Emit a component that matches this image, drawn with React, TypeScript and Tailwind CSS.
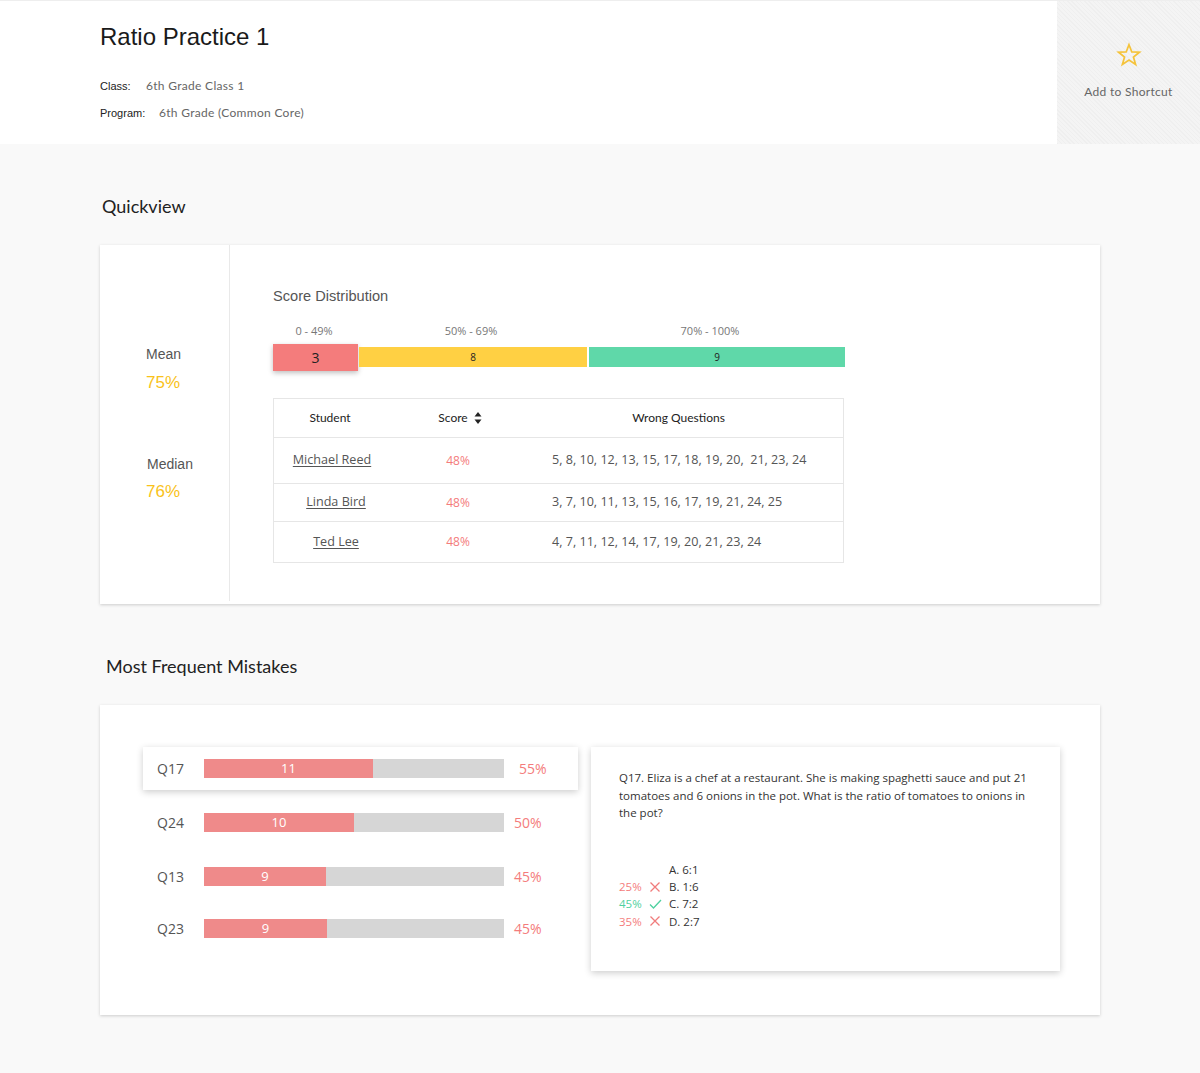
import React from "react";

const lato = "font-['Lato',sans-serif]";
const open = "font-['Open_Sans',sans-serif]";
const helv = "font-['Liberation_Sans',Arial,sans-serif]";

function Star() {
  return (
    <svg width="26" height="26" viewBox="0 0 24 24" fill="none" stroke="#f5c33b" strokeWidth="1.6" strokeLinejoin="miter">
      <polygon points="12,2.5 14.6,9.2 21.6,9.4 16.1,13.8 18.1,20.8 12,16.7 5.9,20.8 7.9,13.8 2.4,9.4 9.4,9.2" />
    </svg>
  );
}

function XIcon() {
  return (
    <svg width="12" height="12" viewBox="0 0 12 12" stroke="#f07c7c" strokeWidth="1.3" fill="none">
      <path d="M1.5 1.5 L10.5 10.5 M10.5 1.5 L1.5 10.5" />
    </svg>
  );
}

function Check() {
  return (
    <svg width="13" height="12" viewBox="0 0 13 12" stroke="#4fd1a0" strokeWidth="1.3" fill="none">
      <path d="M1 6.5 L4.5 10 L12 2" />
    </svg>
  );
}

function SortIcon() {
  return (
    <svg width="8" height="14" viewBox="0 0 8 14" fill="#222">
      <path d="M4 1 L7.5 5.5 H0.5 Z" />
      <path d="M4 13 L7.5 8.5 H0.5 Z" />
    </svg>
  );
}

const students = [
  { name: "Michael Reed", score: "48%", wrong: "5, 8, 10, 12, 13, 15, 17, 18, 19, 20,  21, 23, 24", h: "h-[46px]", pad: "pr-[9px]" },
  { name: "Linda Bird", score: "48%", wrong: "3, 7, 10, 11, 13, 15, 16, 17, 19, 21, 24, 25", h: "h-[38px]", pad: "pr-[1px]" },
  { name: "Ted Lee", score: "48%", wrong: "4, 7, 11, 12, 14, 17, 19, 20, 21, 23, 24", h: "h-[40px]", pad: "pr-[1px]" },
];

const mistakes = [
  { q: "Q17", n: 11, w: 169, pct: "55%", active: true },
  { q: "Q24", n: 10, w: 150, pct: "50%", active: false },
  { q: "Q13", n: 9, w: 122, pct: "45%", active: false },
  { q: "Q23", n: 9, w: 123, pct: "45%", active: false },
];

const answers = [
  { pct: "", color: "", icon: null as React.ReactNode, label: "A. 6:1" },
  { pct: "25%", color: "text-[#f47c7c]", icon: <XIcon />, label: "B. 1:6" },
  { pct: "45%", color: "text-[#4fd1a0]", icon: <Check />, label: "C. 7:2" },
  { pct: "35%", color: "text-[#f47c7c]", icon: <XIcon />, label: "D. 2:7" },
];

export default function App() {
  return (
    <div className="min-h-[1073px] w-[1200px] bg-[#f9f9f9] pb-[58px]">
      {/* Header */}
      <div className="flex h-[144px] border-t border-[#eeeeee] bg-white">
        <div className="flex-1 pl-[100px] pt-[21px]">
          <h1 className={`${helv} text-[24px] leading-[30px] text-[#1a1a1a]`}>Ratio Practice 1</h1>
          <div className="mt-[26px] flex items-center text-[12px] leading-[16px]">
            <span className={`${helv} w-[46px] text-[11px] text-[#222]`}>Class:</span>
            <span className={`${lato} tracking-[0.3px] text-[#666]`}>6th Grade Class 1</span>
          </div>
          <div className="mt-[11px] flex items-center text-[12px] leading-[16px]">
            <span className={`${helv} w-[59px] text-[11px] text-[#222]`}>Program:</span>
            <span className={`${lato} tracking-[0.3px] text-[#666]`}>6th Grade (Common Core)</span>
          </div>
        </div>
        <div className="flex w-[143px] flex-col items-center bg-[repeating-linear-gradient(45deg,#efefef_0px,#efefef_1px,#f4f4f4_1px,#f4f4f4_3px)] pt-[41px]">
          <Star />
          <div className={`${lato} mt-[15px] text-[12px] tracking-[0.3px] text-[#666]`}>Add to Shortcut</div>
        </div>
      </div>

      <div className="mx-auto w-[1000px]">
        {/* Quickview */}
        <h2 className={`${lato} ml-[2px] mt-[51px] text-[18px] leading-[22px] text-[#222]`}>Quickview</h2>
        <div className="mt-[28px] flex h-[359px] bg-white shadow-[0_1px_3px_rgba(0,0,0,0.18)]">
          <div className="mb-[3px] w-[130px] border-r border-[#e9e9e9] pl-[46px] pt-[100px]">
            <div className={`${helv} text-[14px] leading-[18px] text-[#555]`}>Mean</div>
            <div className={`${helv} mt-[10px] text-[17px] leading-[20px] text-[#f9c21a]`}>75%</div>
            <div className={`${helv} mt-[62px] ml-[1px] text-[14px] leading-[18px] text-[#555]`}>Median</div>
            <div className={`${helv} mt-[9px] text-[17px] leading-[20px] text-[#f9c21a]`}>76%</div>
          </div>
          <div className="pl-[43px] pt-[42px]">
            <div className={`${helv} text-[14.6px] leading-[18px] text-[#555]`}>Score Distribution</div>
            <div className={`${open} mt-[19px] flex text-[11px] leading-[14px] text-[#777]`}>
              <div className="w-[86px] pr-[4px] text-center">0 - 49%</div>
              <div className="w-[230px] pr-[6px] text-center">50% - 69%</div>
              <div className="w-[256px] pr-[14px] text-center">70% - 100%</div>
            </div>
            <div className="mt-[5px] flex h-[28px] items-center">
              <div className={`${open} flex h-[27px] w-[85px] items-center justify-center bg-[#f47c7c] text-[14px] text-[#222] shadow-[0_2px_5px_rgba(0,0,0,0.25)]`}>3</div>
              <div className={`${open} ml-[1px] flex h-[20px] w-[228px] items-center justify-center bg-[#ffd043] text-[10px] text-[#222]`}>8</div>
              <div className={`${open} ml-[2px] flex h-[20px] w-[256px] items-center justify-center bg-[#5fd8a9] text-[10px] text-[#222]`}>9</div>
            </div>
            <div className={`${open} mt-[27px] w-[571px] border border-[#e6e6e6] text-[12.6px] text-[#555]`}>
              <div className={`${lato} flex h-[39px] items-center border-b border-[#e6e6e6] text-[12px] text-[#222]`}>
                <div className="w-[112px] text-center">Student</div>
                <div className="flex w-[120px] items-center justify-center gap-[6px] pl-[28px]">
                  Score <SortIcon />
                </div>
                <div className="flex-1 pl-[8px] text-center">Wrong Questions</div>
              </div>
              {students.map((s, i) => (
                <div key={s.name} className={`flex ${s.h} items-center ${i < students.length - 1 ? "border-b border-[#e6e6e6]" : ""}`}>
                  <div className={`w-[125px] ${s.pad} text-center underline underline-offset-2`}>{s.name}</div>
                  <div className="w-[120px] pr-[2px] text-center text-[12px] text-[#f47c7c]">{s.score}</div>
                  <div className="flex-1 whitespace-pre pl-[33px]">{s.wrong}</div>
                </div>
              ))}
            </div>
          </div>
        </div>

        {/* Most Frequent Mistakes */}
        <h2 className={`${lato} ml-[6px] mt-[51px] text-[18px] leading-[22px] text-[#222]`}>Most Frequent Mistakes</h2>
        <div className="mt-[28px] flex h-[310px] items-start bg-white pl-[43px] pt-[42px] shadow-[0_1px_3px_rgba(0,0,0,0.18)]">
          <div className="flex w-[435px] flex-col gap-[11px]">
            {mistakes.map((m, i) => (
              <div
                key={m.q}
                className={`${open} flex h-[43px] items-center ${m.active ? "bg-white shadow-[0_2px_7px_rgba(0,0,0,0.2)]" : ""} ${i === 3 ? "-mt-[2px]" : ""}`}
              >
                <div className="w-[61px] pl-[14px] text-[14px] text-[#555]">{m.q}</div>
                <div className="flex h-[19px] w-[300px] bg-[#d6d6d6]">
                  <div
                    className="flex h-full items-center justify-center bg-[#ef8a8a] text-[13px] text-white"
                    style={{ width: m.w }}
                  >
                    {m.n}
                  </div>
                </div>
                <div className={`${m.active ? "pl-[15px]" : "pl-[10px]"} text-[14px] text-[#f47c7c]`}>{m.pct}</div>
              </div>
            ))}
          </div>
          <div className={`${open} ml-[13px] h-[224px] w-[469px] bg-white pl-[28px] pr-[24px] pt-[22px] text-[11.5px] leading-[17.5px] text-[#333] shadow-[0_2px_7px_rgba(0,0,0,0.2)]`}>
            <p>
              Q17. Eliza is a chef at a restaurant. She is making spaghetti sauce and put 21 tomatoes and 6 onions in
              the pot. What is the ratio of tomatoes to onions in the pot?
            </p>
            <div className="mt-[39px] flex flex-col leading-[17.4px]">
              {answers.map((a) => (
                <div key={a.label} className="flex items-center">
                  <span className={`w-[30px] ${a.color}`}>{a.pct}</span>
                  <span className="flex w-[20px] items-center">{a.icon}</span>
                  <span>{a.label}</span>
                </div>
              ))}
            </div>
          </div>
        </div>
      </div>
    </div>
  );
}
